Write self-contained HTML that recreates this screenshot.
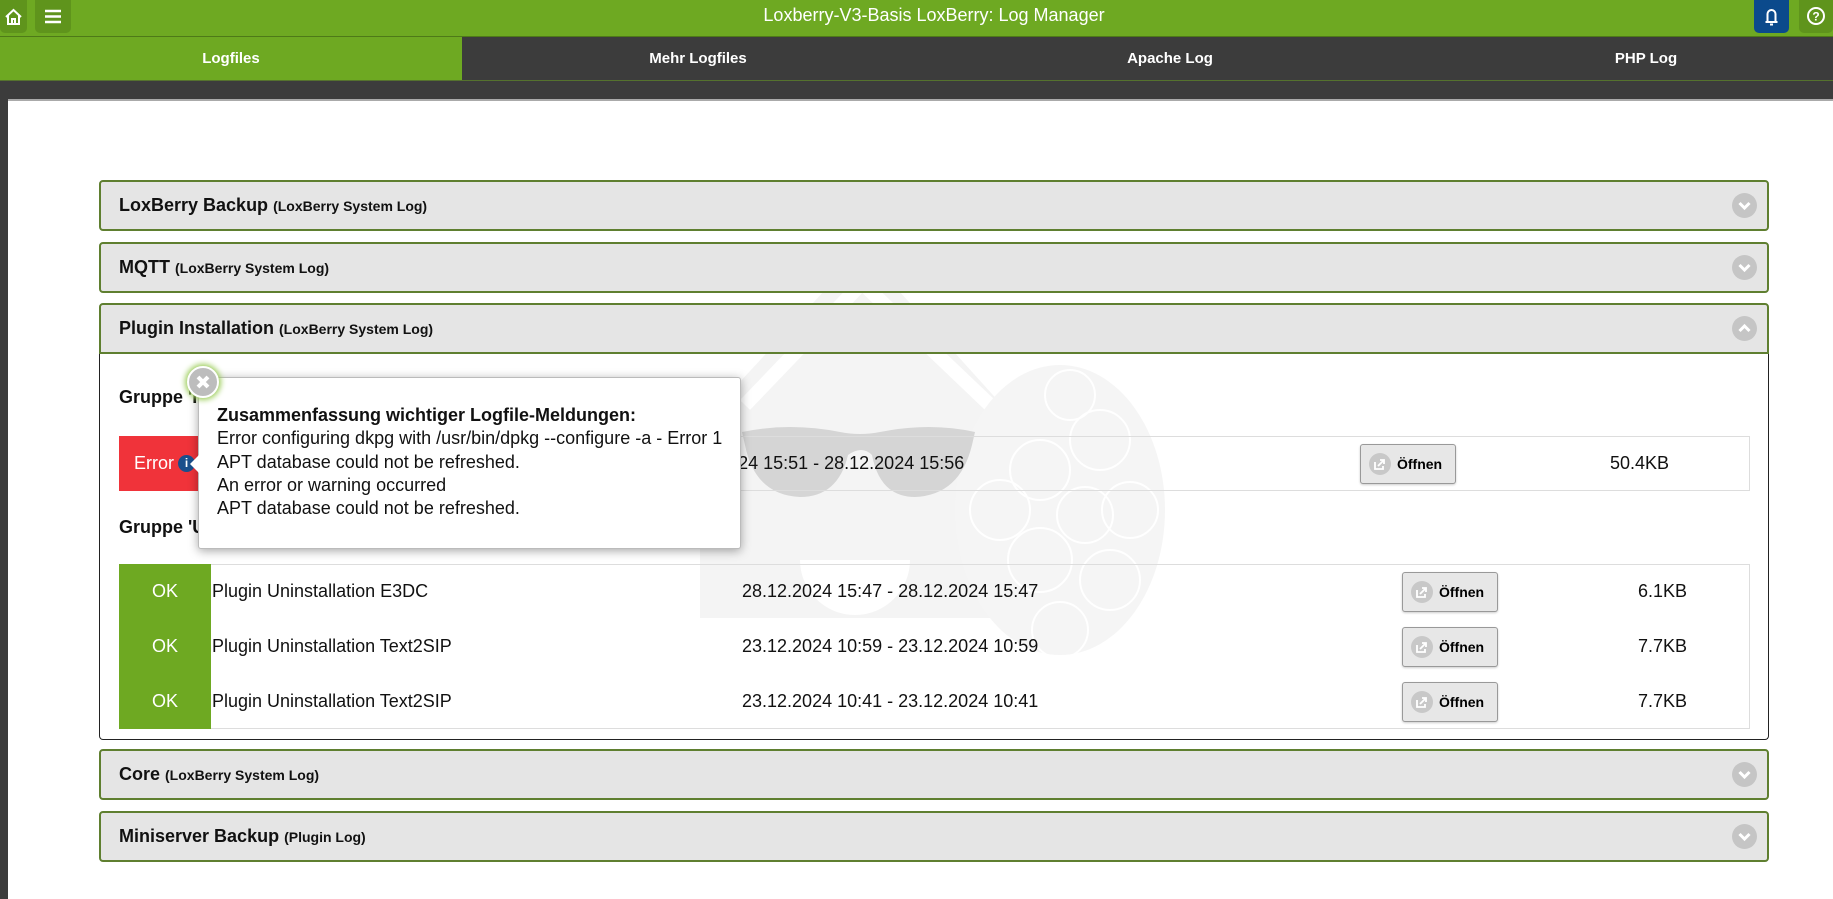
<!DOCTYPE html>
<html><head><meta charset="utf-8"><style>
*{box-sizing:border-box;margin:0;padding:0}
body{width:1833px;height:867px;overflow:hidden;background:#3c3c3c;font-family:"Liberation Sans",Arial,sans-serif;position:relative}
.abs{position:absolute}
.hdr{left:0;top:0;width:1833px;height:37px;background:#6ea922;border-bottom:1px solid #4e7a18}
.hbtn{top:0;height:33px;border-radius:0 0 5px 5px;background:#5f941c}
.title{left:0;width:1868px;top:5px;text-align:center;color:#fff;font-size:18px}
.tab{top:37px;height:44px;width:472px;color:#fff;font-weight:bold;font-size:15px;text-align:center;line-height:44px;background:#3c3c3c;border-bottom:1px solid #55722e}
.panel{left:8px;top:99px;width:1833px;height:800px;background:#fff;border-top:2px solid #aaa}
.acc{left:99px;width:1670px;height:51px;background:#e5e5e5;border:2px solid #5f7f30;border-radius:4px;padding-left:18px;line-height:47px;font-weight:bold;font-size:18px;color:#111}
.acc small{font-size:14px}
.txt{font-size:18px;color:#111;white-space:nowrap}
.btn{width:96px;height:40px;background:#e7e7e7;border:1px solid #999;border-radius:3px;font-weight:bold;font-size:14px;line-height:38px;padding-left:36px;box-shadow:0 1px 2px rgba(0,0,0,.2)}
.btn svg{position:absolute;left:8px;top:8px}
</style></head><body>
<div class="abs hdr"></div>
<div class="abs hbtn" style="left:0;width:27px"><svg width="27" height="33"><path d="M6 17 L13.5 10 L21 17 M8 15 V24 H19 V15 M12 24 V19 H15 V24" stroke="#fff" stroke-width="2" fill="none"/></svg></div>
<div class="abs hbtn" style="left:35px;width:36px"><svg width="36" height="33"><path d="M10 11H26M10 16.5H26M10 22H26" stroke="#fff" stroke-width="2.5"/></svg></div>
<div class="abs title">Loxberry-V3-Basis LoxBerry: Log Manager</div>
<div class="abs hbtn" style="left:1754px;width:35px;background:#0b4a8c"><svg width="35" height="33"><path d="M11.5 22H23.5M13.5 22V14a4 4 0 0 1 8 0V22M16 24.5h3" stroke="#fff" stroke-width="2" fill="none"/></svg></div>
<div class="abs hbtn" style="left:1799px;width:34px"><svg width="34" height="33"><circle cx="17" cy="16" r="8" stroke="#fff" stroke-width="2" fill="none"/><text x="17" y="20.5" fill="#fff" font-size="12" font-weight="bold" text-anchor="middle" font-family="Liberation Sans">?</text></svg></div>
<div class="abs tab" style="left:0;width:462px;background:#6ea922">Logfiles</div>
<div class="abs tab" style="left:462px">Mehr Logfiles</div>
<div class="abs tab" style="left:934px">Apache Log</div>
<div class="abs tab" style="left:1406px;width:480px">PHP Log</div>
<div class="abs panel"></div>

<svg class="abs" style="left:0;top:0" width="1833" height="867">
<path d="M700 618V425L862 250L1020 425V618Z" fill="#f4f4f4"/>
<path d="M745 405L862 283L990 405" stroke="#fff" stroke-width="14" fill="none"/>
<path d="M800 560h110a55 55 0 0 1-110 0z" fill="#fff"/>
<ellipse cx="1060" cy="510" rx="105" ry="145" fill="#f5f5f5"/>
<g stroke="#fff" stroke-width="2" fill="none"><circle cx="1085" cy="515" r="28"/><circle cx="1040" cy="470" r="30"/><circle cx="1100" cy="440" r="30"/><circle cx="1040" cy="560" r="32"/><circle cx="1110" cy="580" r="30"/><circle cx="1000" cy="510" r="30"/><circle cx="1130" cy="510" r="28"/><circle cx="1070" cy="395" r="25"/><circle cx="1060" cy="630" r="28"/></g>
<path d="M742 432Q790 422 840 432Q860 436 880 432Q930 422 975 432L972 445Q960 495 915 497Q880 497 872 455Q862 445 848 455Q838 497 800 497Q755 495 745 445Z" fill="#d5d5d5"/>
</svg>

<svg width="0" height="0" style="position:absolute"><defs>
<g id="cd"><circle cx="12.5" cy="12.5" r="12.5" fill="#c5c5c5"/><path d="M7.5 10L12.5 15L17.5 10" stroke="#fff" stroke-width="3" fill="none"/></g>
<g id="cu"><circle cx="12.5" cy="12.5" r="12.5" fill="#c5c5c5"/><path d="M7.5 15L12.5 10L17.5 15" stroke="#fff" stroke-width="3" fill="none"/></g>
<g id="sh"><circle cx="11" cy="11" r="11" fill="#c8c8c8"/><path d="M6 9V16H14V13M9 13L15 7M11 7H15V11" stroke="#fff" stroke-width="1.8" fill="none"/></g>
</defs></svg>

<div class="abs acc" style="top:180px">LoxBerry Backup <small>(LoxBerry System Log)</small><svg class="abs" style="right:10px;top:11px" width="25" height="25"><use href="#cd"/></svg></div>
<div class="abs acc" style="top:242px">MQTT <small>(LoxBerry System Log)</small><svg class="abs" style="right:10px;top:11px" width="25" height="25"><use href="#cd"/></svg></div>
<div class="abs acc" style="top:303px;border-radius:4px 4px 0 0">Plugin Installation <small>(LoxBerry System Log)</small><svg class="abs" style="right:10px;top:11px" width="25" height="25"><use href="#cu"/></svg></div>
<div class="abs" style="left:99px;top:354px;width:1670px;height:386px;border:1px solid #222;border-top:none;border-radius:0 0 4px 4px"></div>

<div class="abs txt" style="left:119px;top:387px;font-weight:bold">Gruppe 'Installation'</div>
<div class="abs" style="left:119px;top:436px;width:1631px;height:55px;border:1px solid #ddd"></div>
<div class="abs" style="left:119px;top:436px;width:90px;height:55px;background:#f0333a"></div>
<div class="abs txt" style="left:134px;top:453px;color:#fff">Error</div>
<div class="abs" style="left:178px;top:455px;width:17px;height:17px;border-radius:50%;background:#1a4f8c;color:#fff;font-size:12px;font-weight:bold;text-align:center;line-height:17px">i</div>
<div class="abs txt" style="left:668px;top:453px">28.12.2024 15:51 - 28.12.2024 15:56</div>
<div class="abs btn" style="left:1360px;top:444px">Öffnen<svg width="22" height="22"><use href="#sh"/></svg></div>
<div class="abs txt" style="left:1610px;top:453px">50.4KB</div>

<div class="abs txt" style="left:119px;top:517px;font-weight:bold">Gruppe 'Uninstallation'</div>
<div class="abs" style="left:119px;top:564px;width:1631px;height:165px;border:1px solid #ddd"></div>
<div class="abs" style="left:119px;top:564px;width:92px;height:165px;background:#6ea922"></div>
<div class="abs txt" style="left:152px;top:581px;color:#fff">OK</div>
<div class="abs txt" style="left:152px;top:636px;color:#fff">OK</div>
<div class="abs txt" style="left:152px;top:691px;color:#fff">OK</div>
<div class="abs txt" style="left:212px;top:581px">Plugin Uninstallation E3DC</div>
<div class="abs txt" style="left:212px;top:636px">Plugin Uninstallation Text2SIP</div>
<div class="abs txt" style="left:212px;top:691px">Plugin Uninstallation Text2SIP</div>
<div class="abs txt" style="left:742px;top:581px">28.12.2024 15:47 - 28.12.2024 15:47</div>
<div class="abs txt" style="left:742px;top:636px">23.12.2024 10:59 - 23.12.2024 10:59</div>
<div class="abs txt" style="left:742px;top:691px">23.12.2024 10:41 - 23.12.2024 10:41</div>
<div class="abs btn" style="left:1402px;top:572px">Öffnen<svg width="22" height="22"><use href="#sh"/></svg></div>
<div class="abs btn" style="left:1402px;top:627px">Öffnen<svg width="22" height="22"><use href="#sh"/></svg></div>
<div class="abs btn" style="left:1402px;top:682px">Öffnen<svg width="22" height="22"><use href="#sh"/></svg></div>
<div class="abs txt" style="left:1638px;top:581px">6.1KB</div>
<div class="abs txt" style="left:1638px;top:636px">7.7KB</div>
<div class="abs txt" style="left:1638px;top:691px">7.7KB</div>

<div class="abs acc" style="top:749px">Core <small>(LoxBerry System Log)</small><svg class="abs" style="right:10px;top:11px" width="25" height="25"><use href="#cd"/></svg></div>
<div class="abs acc" style="top:811px">Miniserver Backup <small>(Plugin Log)</small><svg class="abs" style="right:10px;top:11px" width="25" height="25"><use href="#cd"/></svg></div>

<div class="abs" style="left:198px;top:377px;width:543px;height:172px;background:#fff;border:1px solid #bbb;border-radius:3px;box-shadow:0 2px 10px rgba(0,0,0,.35);padding:26px 0 0 18px;font-size:18px;line-height:23.3px;color:#111">
<b>Zusammenfassung wichtiger Logfile-Meldungen:</b><br>Error configuring dkpg with /usr/bin/dpkg --configure -a - Error 1<br>APT database could not be refreshed.<br>An error or warning occurred<br>APT database could not be refreshed.</div>
<div class="abs" style="left:190px;top:455px;width:0;height:0;border-top:9px solid transparent;border-bottom:9px solid transparent;border-right:9px solid #fff"></div>
<div class="abs" style="left:187px;top:366px;width:32px;height:32px;border-radius:50%;background:#bdbdbd;border:2px solid #fff;box-shadow:0 0 6px 2px #9ccd5a"><svg width="28" height="28"><path d="M9 9L19 19M19 9L9 19" stroke="#fff" stroke-width="4"/></svg></div>
</body></html>
